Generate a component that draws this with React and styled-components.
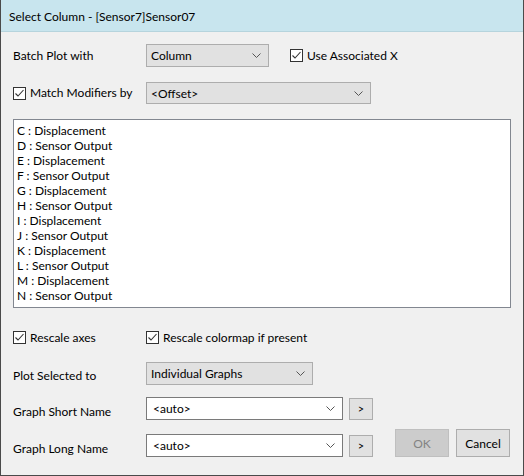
import React from "react";
import styled, { createGlobalStyle } from "styled-components";

const Global = createGlobalStyle`
  html, body { margin: 0; padding: 0; background: #f0f0f0; }
  body { font-family: Lato, "Noto Sans", sans-serif; font-size: 12px; color: #000; }
  * { box-sizing: border-box; }
`;

const Window = styled.div`
  width: 524px;
  height: 476px;
  display: flex;
  flex-direction: column;
  background: #f0f0f0;
  border: 1px solid #4a4a4a;
  border-top: none;
`;

const TitleBar = styled.div`
  height: 32px;
  flex: none;
  display: flex;
  align-items: center;
  padding-left: 8px;
  padding-top: 1px;
  background: #c8e5ee;
  border-bottom: 1px solid #b6d4dd;
  color: #000;
`;

const Body = styled.div`
  display: flex;
  flex-direction: column;
  padding: 0 12px;
`;

const Row = styled.div`
  display: flex;
  align-items: ${(p) => p.$align || "center"};
  height: ${(p) => p.$h || 23}px;
  margin-top: ${(p) => p.$mt || 0}px;
`;

const Label = styled.div`
  width: 133px;
  flex: none;
  line-height: 16px;
  padding-top: ${(p) => p.$pt || 0}px;
`;

const Select = styled.div`
  width: ${(p) => p.$w}px;
  height: ${(p) => p.$h || 23}px;
  flex: none;
  display: flex;
  align-items: center;
  justify-content: space-between;
  padding: 0 7px 0 ${(p) => (p.$white ? 6 : 4)}px;
  background: ${(p) => (p.$white ? "#ffffff" : "#e1e1e1")};
  border: 1px solid ${(p) => (p.$white ? "#7a7a7a" : "#adadad")};
`;

const CheckWrap = styled.label`
  display: flex;
  align-items: center;
  gap: 4px;
  flex: none;
  width: ${(p) => (p.$w ? `${p.$w}px` : "auto")};
  margin-left: ${(p) => p.$ml || 0}px;
  line-height: 16px;
`;

const Box = styled.span`
  width: 13px;
  height: 13px;
  flex: none;
  display: inline-flex;
  background: #fff;
  border: 1px solid #333;
`;

const List = styled.div`
  margin-top: 15px;
  width: 498px;
  height: 189px;
  background: #fff;
  border: 1px solid #828790;
  padding: 3px 3px 0;
`;

const Item = styled.div`
  height: 15px;
  line-height: 15px;
  white-space: nowrap;
`;

const SmallBtn = styled.div`
  width: 24px;
  height: 22px;
  flex: none;
  margin-left: 6px;
  display: flex;
  align-items: center;
  justify-content: center;
  background: #e1e1e1;
  border: 1px solid #adadad;
  font-size: 11px;
`;

const Group = styled.div`
  display: flex;
  align-items: center;
  height: 23px;
`;

const Buttons = styled.div`
  display: flex;
  gap: 7px;
  margin-left: 22px;
`;

const Button = styled.div`
  width: 54px;
  height: 28px;
  display: flex;
  align-items: center;
  justify-content: center;
  background: ${(p) => (p.$disabled ? "#cccccc" : "#e1e1e1")};
  border: 1px solid ${(p) => (p.$disabled ? "#bfbfbf" : "#adadad")};
  color: ${(p) => (p.$disabled ? "#838383" : "#000")};
`;

const Chevron = () => (
  <svg width="9" height="5" viewBox="0 0 9 5">
    <path d="M0.5 0.5 L4.5 4.5 L8.5 0.5" fill="none" stroke="#555" strokeWidth="1" />
  </svg>
);

const Check = ({ label, w, ml }) => (
  <CheckWrap $w={w} $ml={ml}>
    <Box>
      <svg width="11" height="11" viewBox="0 0 11 11">
        <path d="M1.5 5.5 L4 8 L9.5 2" fill="none" stroke="#333" strokeWidth="1.1" />
      </svg>
    </Box>
    <span>{label}</span>
  </CheckWrap>
);

const items = [
  "C : Displacement",
  "D : Sensor Output",
  "E : Displacement",
  "F : Sensor Output",
  "G : Displacement",
  "H : Sensor Output",
  "I : Displacement",
  "J : Sensor Output",
  "K : Displacement",
  "L : Sensor Output",
  "M : Displacement",
  "N : Sensor Output",
];

export default function App() {
  return (
    <>
      <Global />
      <Window>
        <TitleBar>Select Column - [Sensor7]Sensor07</TitleBar>
        <Body>
          <Row $mt={12}>
            <Label $pt={1}>Batch Plot with</Label>
            <Select $w={123}>
              <span>Column</span>
              <Chevron />
            </Select>
            <Check label="Use Associated X" ml={21} />
          </Row>
          <Row $mt={15} $h={22}>
            <Check label="Match Modifiers by" w={133} />
            <Select $w={225} $h={22}>
              <span>&lt;Offset&gt;</span>
              <Chevron />
            </Select>
          </Row>
          <List>
            {items.map((t) => (
              <Item key={t}>{t}</Item>
            ))}
          </List>
          <Row $mt={18}>
            <Check label="Rescale axes" w={133} />
            <Check label="Rescale colormap if present" />
          </Row>
          <Row $mt={13}>
            <Label $pt={5}>Plot Selected to</Label>
            <Select $w={167}>
              <span>Individual Graphs</span>
              <Chevron />
            </Select>
          </Row>
          <Row $mt={12}>
            <Label $pt={6}>Graph Short Name</Label>
            <Select $w={197} $white>
              <span>&lt;auto&gt;</span>
              <Chevron />
            </Select>
            <SmallBtn>&gt;</SmallBtn>
          </Row>
          <Row $mt={9} $h={28} $align="flex-end">
            <Group>
              <Label $pt={6}>Graph Long Name</Label>
              <Select $w={197} $white>
                <span>&lt;auto&gt;</span>
                <Chevron />
              </Select>
              <SmallBtn>&gt;</SmallBtn>
            </Group>
            <Buttons>
              <Button $disabled>OK</Button>
              <Button>Cancel</Button>
            </Buttons>
          </Row>
        </Body>
      </Window>
    </>
  );
}
